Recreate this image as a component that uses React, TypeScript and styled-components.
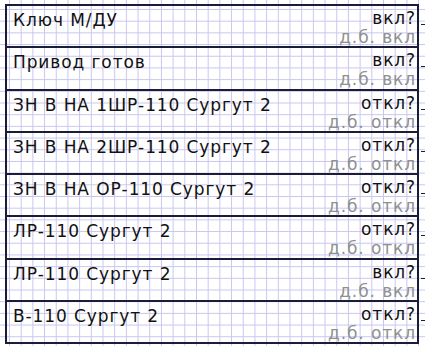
import React from "react";
import styled, { createGlobalStyle } from "styled-components";

const Global = createGlobalStyle`
  html, body { margin: 0; padding: 0; }
  body {
    width: 425px;
    height: 346px;
    overflow: hidden;
    background-color: #ffffff;
    background-image:
      linear-gradient(to right, #c9c6ee 1px, transparent 1px),
      linear-gradient(to bottom, #c9c6ee 1px, transparent 1px);
    background-size: 11.7px 11.7px;
    background-position: 9px 9px;
    font-family: "DejaVu Sans", Verdana, sans-serif;
  }
`;

const Panel = styled.div`
  margin: 4px 0 0 5px;
  width: 414px;
  display: flex;
  flex-direction: column;
  border-top: 2px solid #1b1b3a;
`;

const Row = styled.div`
  position: relative;
  height: 40.3px;
  box-sizing: content-box;
  display: flex;
  justify-content: space-between;
  align-items: flex-start;
  border-left: 2px solid #1b1b3a;
  border-right: 2px solid #1b1b3a;
  border-bottom: 2px solid #1b1b3a;
  padding: 0 1px 0 6px;
  &::after {
    content: "";
    position: absolute;
    right: -8px;
    top: 18px;
    width: 4px;
    height: 1px;
    background: #1b1b3a;
  }
`;

const Text = styled.span`
  font-size: 17px;
  line-height: 19px;
  letter-spacing: 0.9px;
  white-space: nowrap;
`;

const Label = styled(Text)`
  color: #111;
  padding-top: 5px;
`;

const State = styled.div`
  display: flex;
  flex-direction: column;
  align-items: flex-end;
  padding-top: 3px;
`;

const Current = styled(Text)`
  color: #111;
`;

const Expected = styled(Text)`
  color: #909090;
`;

const rows = [
  { label: "Ключ М/ДУ", cur: "вкл?", exp: "д.б. вкл" },
  { label: "Привод готов", cur: "вкл?", exp: "д.б. вкл" },
  { label: "ЗН В НА 1ШР-110 Сургут 2", cur: "откл?", exp: "д.б. откл" },
  { label: "ЗН В НА 2ШР-110 Сургут 2", cur: "откл?", exp: "д.б. откл" },
  { label: "ЗН В НА ОР-110 Сургут 2", cur: "откл?", exp: "д.б. откл" },
  { label: "ЛР-110 Сургут 2", cur: "откл?", exp: "д.б. откл" },
  { label: "ЛР-110 Сургут 2", cur: "вкл?", exp: "д.б. вкл" },
  { label: "В-110 Сургут 2", cur: "откл?", exp: "д.б. откл" },
];

export default function App() {
  return (
    <>
      <Global />
      <Panel>
        {rows.map((r, i) => (
          <Row key={i}>
            <Label>{r.label}</Label>
            <State>
              <Current>{r.cur}</Current>
              <Expected>{r.exp}</Expected>
            </State>
          </Row>
        ))}
      </Panel>
    </>
  );
}
